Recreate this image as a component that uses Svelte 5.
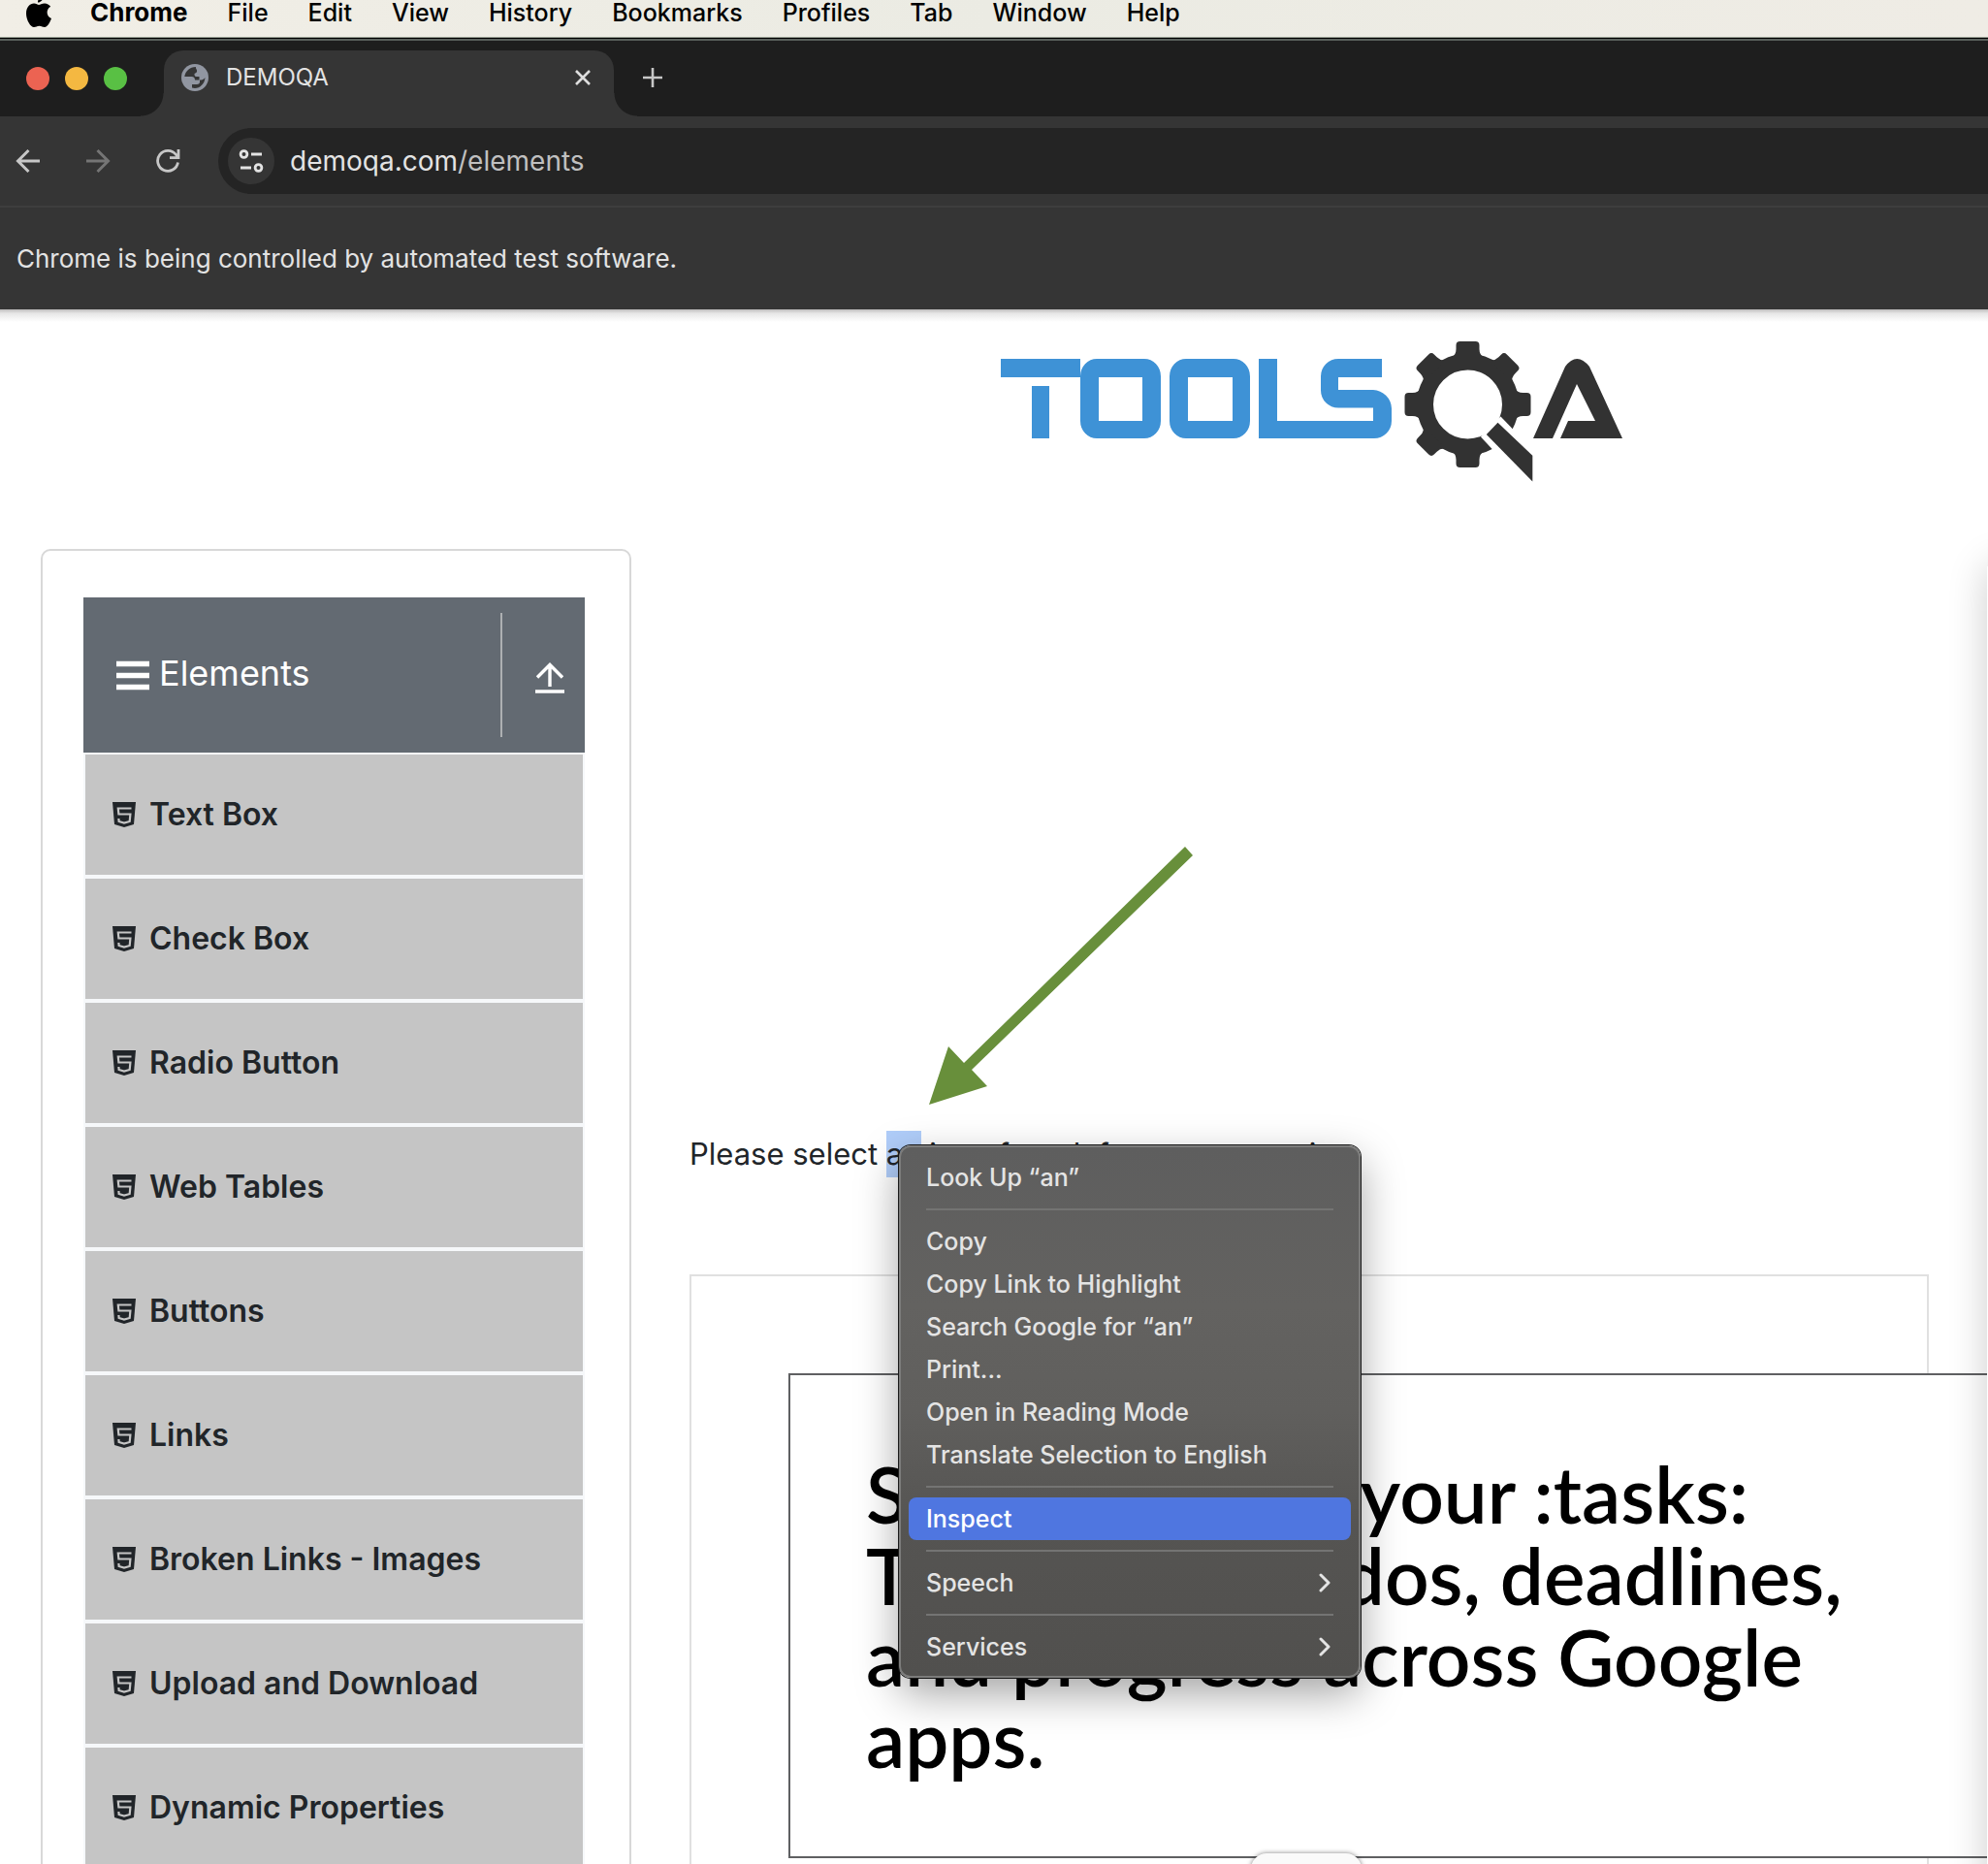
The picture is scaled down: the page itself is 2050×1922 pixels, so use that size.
<script>
  const menus = ['File', 'Edit', 'View', 'History', 'Bookmarks', 'Profiles', 'Tab', 'Window', 'Help'];
  const items = [
    'Text Box', 'Check Box', 'Radio Button', 'Web Tables', 'Buttons', 'Links',
    'Broken Links - Images', 'Upload and Download', 'Dynamic Properties'
  ];
  const groups = [
    [{ label: 'Look Up “an”' }],
    [
      { label: 'Copy' },
      { label: 'Copy Link to Highlight' },
      { label: 'Search Google for “an”' },
      { label: 'Print...' },
      { label: 'Open in Reading Mode' },
      { label: 'Translate Selection to English' }
    ],
    [{ label: 'Inspect', active: true }],
    [{ label: 'Speech', sub: true }],
    [{ label: 'Services', sub: true }]
  ];
  const teeth = [0, 45, 90, 180, 225, 270, 315];
</script>

<div class="screen">
  <nav class="menubar" aria-label="Menu bar">
    <button class="apple" aria-label="Apple menu">
      <svg width="28" height="36" viewBox="0 0 28 36">
        <path d="M19 0c.2 3-2.900 6.600-6 6.600C12.600 3.800 15.600.4 19 0z" />
        <path d="M14 9c1.500 0 3-1.600 6-1.600 2.500 0 4.800 1.300 6.200 3.400-5.300 3.200-4.400 10.200.8 12.300-1.100 3.200-3.900 8.900-7 8.900-2.200 0-3-1.300-5.500-1.300S11.200 32 9 32C5.600 32 1 24.700 1 17.900 1 11.400 5 7.600 9 7.600c2.500 0 3.800 1.400 5 1.400z" />
      </svg>
    </button>
    <button class="app">Chrome</button>
    {#each menus as m}<button>{m}</button>{/each}
  </nav>

  <div class="browser">
    <div class="strip">
      <div class="lights">
        <button class="red" aria-label="Close window"></button>
        <button class="yellow" aria-label="Minimize window"></button>
        <button class="green" aria-label="Zoom window"></button>
      </div>
      <div class="tab">
        <svg class="fav" width="28" height="28" viewBox="0 0 28 28">
          <circle cx="14" cy="14" r="14" fill="#9196a1" />
          <path d="M15 3C8.500 3 4.200 7.500 3.300 13h7.200c2.500 0 3.500 1.500 3.500 3.500h4.500V13h-3c-2 0-2-1.500-2-3 1-.5 3-1 2.500-3.500C15.700 5 14.500 4.500 15 3z" fill="#353535" />
          <path d="M24.500 14c-1.500 2-3 2.500-5.500 2.500v2c0 1.500-1 2.500-3 2.500h-5v3.500c6.500 2 13-3 13.500-10.500z" fill="#353535" />
        </svg>
        <span>DEMOQA</span>
        <button class="close" aria-label="Close tab">
          <svg width="18" height="18" viewBox="0 0 18 18"><path d="M2 2l14 14M16 2L2 16" fill="none" stroke="#dedede" stroke-width="2.600" /></svg>
        </button>
      </div>
      <button class="plus" aria-label="New tab">
        <svg width="22" height="22" viewBox="0 0 22 22"><path d="M11 1v20M1 11h20" fill="none" stroke="#c7c7c7" stroke-width="2.600" /></svg>
      </button>
    </div>

    <div class="toolbar">
      <button aria-label="Back">
        <svg width="26" height="26" viewBox="0 0 26 26"><path d="M25 13H3M13.500 2L2.500 13l11 11" fill="none" stroke="#c7c7c7" stroke-width="3" /></svg>
      </button>
      <button aria-label="Forward">
        <svg width="26" height="26" viewBox="0 0 26 26"><path d="M1 13h22M12.500 2l11 11-11 11" fill="none" stroke="#757575" stroke-width="3" /></svg>
      </button>
      <button aria-label="Reload">
        <svg width="26" height="26" viewBox="0 0 26 26"><path d="M23.500 14.500A10.500 10.500 0 1 1 21.500 6.500L24 9.500M24 1v8.700h-9" fill="none" stroke="#c7c7c7" stroke-width="2.800" /></svg>
      </button>
      <div class="omnibox">
        <button class="site" aria-label="Site information">
          <svg width="26" height="24" viewBox="0 0 26 24" fill="none" stroke="#e3e3e3" stroke-width="2.800">
            <circle cx="5.500" cy="5" r="3.400" /><path d="M13 5h11M2 19h11" /><circle cx="20.500" cy="19" r="3.400" />
          </svg>
        </button>
        <a href="#elements">demoqa.com<span>/elements</span></a>
      </div>
    </div>
    <div class="infobar">Chrome is being controlled by automated test software.</div>
  </div>

  <div class="page">
    <header>
      <svg class="logo" viewBox="0 0 650 150" role="img" aria-label="TOOLSQA">
        <g fill="none" stroke="#3e92d6">
          <path d="M0 31.500h82" stroke-width="19" /><path d="M41 50v54" stroke-width="18" />
        </g>
        <g fill="#3e92d6" fill-rule="evenodd">
          <path d="M99 22h49a17 18 0 0 1 17 18v46a17 18 0 0 1-17 18h-49a17 18 0 0 1-17-18v-46a17 18 0 0 1 17-18zM101 41v45h45v-45z" />
          <path d="M191 22h49a17 18 0 0 1 17 18v46a17 18 0 0 1-17 18h-49a17 18 0 0 1-17-18v-46a17 18 0 0 1 17-18zM193 41v45h46v-45z" />
          <path d="M266 22h19v64h99V72.500h-36a18 18 0 0 1-18-18V40a18 18 0 0 1 18-18h45v19h-45v13h36a20 20 0 0 1 19 19v13a18 18 0 0 1-18 18H266z" />
        </g>
        <g transform="translate(481.500 69)">
          <circle r="44" fill="none" stroke="#323232" stroke-width="17" />
          {#each teeth as t}
            <path d="M-17-48Q-12-51-12-57V-61Q-12-65-8-65H8Q12-65 12-61V-57Q12-51 17-48z" fill="#323232" transform="rotate({t})" />
          {/each}
          <path d="M34 12.500L13.500 33.500L40 62L72 52z" fill="#fff" />
          <path d="M19.300 31L31 18.700L66.800 52.700V79.400z" fill="#323232" />
        </g>
        <path d="M549 104L582 30Q594 14 607 30L641 104H577L585 86H613L594 48L569 104z" fill="#323232" />
      </svg>
    </header>

    <div class="columns">
      <aside>
        <div class="group">
          <div class="group-head">
            <svg width="34" height="32" viewBox="0 0 34 32"><path d="M0 4.500h34M0 16.500h34M0 28.500h34" stroke="#fff" stroke-width="5.500" /></svg>
            <span class="title">Elements</span>
            <button class="fold" aria-label="Collapse Elements">
              <svg width="30" height="32" viewBox="0 0 30 32"><path d="M15 25V3M2 15.500L15 2.500l13 13M0 30h30" fill="none" stroke="#fff" stroke-width="3.400" /></svg>
            </button>
          </div>
          <ul>
            {#each items as it}
              <li>
                <a href="#item">
                  <svg width="24" height="26" viewBox="0 0 24 26">
                    <path d="M0 0h24l-2 23-10 3-10-3z" fill="#212529" />
                    <path d="M19.500 6.500H5.800l.6 6h12l-.7 7.500-5.700 1.600-5.400-1.600-.2-3" fill="none" stroke="#c5c5c5" stroke-width="2.200" />
                  </svg>
                  {it}
                </a>
              </li>
            {/each}
          </ul>
        </div>
      </aside>

      <main>
        <div class="prompt">
          Please select <mark>an</mark> item from left to start practice.
          <svg class="arrow" width="274" height="268" viewBox="0 0 274 268" aria-hidden="true">
            <path d="M265 1l8 9L45 231l16 17L1 267l20-60 16 17z" fill="#688f3b" />
          </svg>
          <div class="context" role="menu">
            {#each groups as g, i}
              {#if i}<hr />{/if}
              {#each g as it}
                <button role="menuitem" class:active={it.active}>
                  {it.label}
                  {#if it.sub}
                    <svg width="14" height="20" viewBox="0 0 14 20"><path d="M3 2l8 8-8 8" fill="none" stroke="#e4e4e4" stroke-width="3" stroke-linecap="round" stroke-linejoin="round" /></svg>
                  {/if}
                </button>
              {/each}
            {/each}
          </div>
        </div>

        <section class="frame">
          <div class="ad">
            <h2>Stay on top of your :tasks:<br />Track your to-dos, deadlines,<br />and progress across Google<br />apps.</h2>
            <div class="handle"></div>
          </div>
        </section>
      </main>
    </div>
    <div class="edge"></div>
  </div>
</div>

<style>
  :global(body) { background: #fff; }
  .screen {
    height: 100vh;
    overflow: hidden;
    display: flex;
    flex-direction: column;
    font-family: Inter, "Liberation Sans", sans-serif;
    background: #fff;
  }
  button { font: inherit; color: inherit; background: none; border: 0; padding: 0; margin: 0; display: block; flex: none; }
  a { color: inherit; text-decoration: none; }
  svg { display: block; flex: none; }

  .menubar {
    height: 38px;
    box-sizing: border-box;
    flex: none;
    display: flex;
    align-items: flex-start;
    gap: 41px;
    padding: 0 26px;
    background: linear-gradient(90deg, #f1eee6, #ebebe3 50%, #efece5);
    font-size: 25px;
    line-height: 26px;
    font-weight: 500;
    color: #000;
  }
  .menubar .apple { margin-top: -4px; }
  .menubar .app { font-size: 26px; font-weight: 700; margin-left: -2px; }

  .browser { flex: none; background: #353535; border-top: 1px solid #98a094; }
  .strip {
    height: 81px;
    box-sizing: border-box;
    border-top: 1px solid #000;
    box-shadow: inset 0 2px 0 #59605c;
    background: #1e1e1e;
    display: flex;
    align-items: flex-end;
    padding-left: 27px;
  }
  .lights { display: flex; gap: 16px; padding-bottom: 27px; width: 142px; }
  .lights button { width: 24px; height: 24px; border-radius: 50%; }
  .red { background: #ec6352; }
  .yellow { background: #f4b841; }
  .green { background: #59c044; }
  .tab {
    position: relative;
    width: 464px;
    height: 68px;
    box-sizing: border-box;
    background: #353535;
    border-radius: 20px 20px 0 0;
    display: flex;
    align-items: center;
    padding: 0 23px 12px 18px;
    gap: 18px;
    font-size: 24px;
    line-height: 28px;
    color: #e3e3e3;
  }
  .tab::before, .tab::after {
    content: "";
    position: absolute;
    bottom: 0;
    width: 24px;
    height: 24px;
  }
  .tab::before { right: 100%; background: radial-gradient(circle at 0 0, #1e1e1e 23px, #353535 24px); }
  .tab::after { left: 100%; background: radial-gradient(circle at 100% 0, #1e1e1e 23px, #353535 24px); }
  .close { margin-left: auto; }
  .plus { margin: 0 0 29px 29px; }

  .toolbar {
    display: flex;
    align-items: center;
    height: 92px;
    padding-left: 16px;
    gap: 46px;
    border-bottom: 2px solid #3e3e3e;
  }
  .omnibox {
    flex: 1;
    height: 68px;
    margin-left: -7px;
    border-radius: 34px 0 0 34px;
    background: #242424;
    display: flex;
    align-items: center;
    gap: 16px;
    padding-left: 10px;
    font-size: 28px;
    line-height: 36px;
    color: #e3e3e3;
  }
  .omnibox a span { color: #c0c0c0; }
  .site {
    width: 48px;
    height: 48px;
    border-radius: 50%;
    background: #353535;
    display: grid;
    place-items: center;
  }
  .infobar {
    height: 105px;
    box-sizing: border-box;
    padding: 0 17px;
    display: flex;
    align-items: center;
    font-size: 26px;
    line-height: 32px;
    color: #e3e3e3;
  }

  .page {
    flex: 1;
    min-height: 0;
    position: relative;
    overflow: hidden;
    color: #212529;
    background: linear-gradient(#bdbbbb, #e6e6e6 4px, #fff 13px);
  }
  header { box-sizing: border-box; display: flex; justify-content: center; padding: 29px 0 68px 664px; }
  .logo { width: 650px; height: 150px; }

  .columns { display: grid; grid-template-columns: 609px minmax(0, 1fr); gap: 60px; padding: 0 61px 0 42px; }
  aside {
    box-sizing: border-box;
    border: 2px solid #d8d8d8;
    border-radius: 10px;
    padding: 48px 46px 48px 42px;
  }
  .group-head {
    display: flex;
    align-items: center;
    height: 160px;
    box-sizing: border-box;
    padding: 16px 0 16px 34px;
    gap: 10px;
    background: #636a72;
    color: #fff;
    font-size: 36px;
    line-height: 44px;
  }
  .title { padding-bottom: 4px; }
  .fold {
    margin-left: auto;
    height: 128px;
    width: 87px;
    box-sizing: border-box;
    border-left: 2px solid #adb0b2;
    display: grid;
    place-items: center;
    padding: 6px 0 0 12px;
  }
  ul { list-style: none; margin: 0; padding: 0 2px; background: #f6f8fa; }
  li { border-top: 2px solid #f6f8fa; border-bottom: 2px solid #f6f8fa; }
  li a {
    display: flex;
    align-items: center;
    gap: 14px;
    height: 124px;
    box-sizing: border-box;
    padding: 0 28px;
    background: #c5c5c5;
    font-size: 32px;
    line-height: 40px;
    font-weight: 600;
  }

  main { padding-top: 600px; }
  .prompt { position: relative; font-size: 31px; line-height: 48px; white-space: nowrap; }
  mark { display: inline-block; background: #b0cdf9; color: inherit; }
  .arrow { position: absolute; left: 246px; top: -294px; }
  .context {
    position: absolute;
    z-index: 2;
    left: 216px;
    top: 15px;
    width: 476px;
    box-sizing: border-box;
    padding: 9px 8px 8px;
    border: 2px solid #7c7c7b;
    border-radius: 12px;
    background: linear-gradient(#5e5e5e, #636260 30%, #605f5d 50%, #555452 72%, #51504e);
    box-shadow: 0 0 0 1px #1a1a1a, 0 16px 44px rgba(0, 0, 0, .36);
    color: #e4e4e4;
    font-size: 25px;
    line-height: 44px;
    font-weight: 500;
  }
  .context button {
    width: 100%;
    height: 44px;
    padding: 0 20px 0 18px;
    display: flex;
    align-items: center;
    justify-content: space-between;
    text-align: left;
    border-radius: 8px;
  }
  .context .active { background: #4f76e0; color: #fff; }
  hr { height: 2px; border: 0; margin: 10px 18px; background: #747473; }

  .frame { margin-top: 100px; border: 2px solid #e0e0e0; padding: 100px 0 100px 100px; }
  .ad {
    position: relative;
    box-sizing: border-box;
    height: 500px;
    margin-right: -100px;
    padding: 80px 78px;
    border: 2px solid #5f6062;
    background: #fff;
    color: #000;
  }
  h2 { margin: 0; font: 600 80px/84px Lato, sans-serif; white-space: nowrap; }
  .handle {
    position: absolute;
    left: 475px;
    top: 493px;
    width: 114px;
    height: 60px;
    border-radius: 16px;
    background: #fafafa;
    box-shadow: 0 0 5px rgba(0, 0, 0, .5);
  }
  .edge {
    position: absolute;
    z-index: 1;
    left: calc(100% - 1px);
    top: 265px;
    bottom: -60px;
    width: 60px;
    background: #fff;
    box-shadow: 0 0 40px rgba(0, 0, 0, .2);
  }
</style>
